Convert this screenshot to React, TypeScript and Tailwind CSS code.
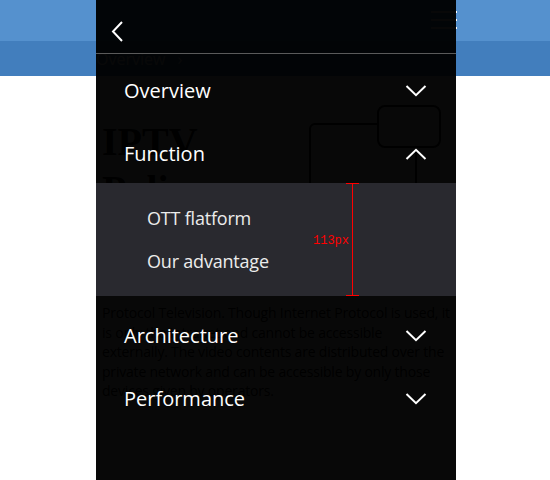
import React from "react";

const Chevron = ({ up = false }: { up?: boolean }) => (
  <svg width="22" height="12" viewBox="0 0 22 12" fill="none" className="block">
    {up ? (
      <path d="M1.5 11 L11 1.8 L20.5 11" stroke="#fff" strokeWidth="2" />
    ) : (
      <path d="M1.5 1 L11 10.2 L20.5 1" stroke="#fff" strokeWidth="2" />
    )}
  </svg>
);

const Row = ({ label, up, className }: { label: string; up?: boolean; className: string }) => (
  <div className={`flex items-center justify-between pl-[28px] pr-[29px] ${className}`}>
    <span className="text-[20px] leading-none text-white">{label}</span>
    <Chevron up={up} />
  </div>
);

export default function App() {
  return (
    <div
      className="relative w-[550px] h-[480px] overflow-hidden bg-white"
      style={{ fontFamily: "'Open Sans', 'Noto Sans', sans-serif" }}
    >
      {/* underlying page */}
      <div className="h-[41px] bg-[#5591ce]">
        <div className="mx-auto w-[360px] h-full flex justify-end items-start pt-[11px]">
          <div className="flex flex-col gap-[6px] w-[26px] mr-[-2px]">
            <div className="h-[2px] bg-white" />
            <div className="h-[2px] bg-white" />
            <div className="h-[2px] bg-white" />
          </div>
        </div>
      </div>
      <div className="h-[35px] bg-[#427ebd]">
        <div className="mx-auto w-[360px] h-full flex items-center text-white text-[16px] gap-3 pl-[1px]">
          <span>Overview</span>
          <span>›</span>
        </div>
      </div>
      <div className="mx-auto w-[360px] relative h-[404px]">
        <div
          className="pt-[42px] pl-[7px] text-[40px] font-bold leading-[48px] text-black"
          style={{ fontFamily: "'Liberation Serif', serif" }}
        >
          IPTV
          <br />
          Poli
        </div>
        <div className="absolute left-[214px] top-[47px] w-[108px] h-[140px] border-2 border-black rounded-md" />
        <div className="absolute left-[282px] top-[29px] w-[64px] h-[43px] border-2 border-black rounded-lg bg-white" />
        <p className="absolute left-[7px] top-[227px] w-[352px] whitespace-nowrap text-[14px] leading-[19.5px] tracking-[-0.2px] text-black">
          Protocol Television. Though Internet Protocol is used, it
          <br />
          is only the intranet end cannot be accessible
          <br />
          externally. The video contents are distributed over the
          <br />
          private network and can be accessible by only those
          <br />
          devices given by operators.
        </p>
      </div>

      {/* drawer overlay */}
      <div className="absolute top-0 bottom-0 left-[96px] w-[360px] bg-[rgba(0,0,0,0.97)] flex flex-col">
        <div className="h-[53px] flex items-center pl-[15px]">
          <svg width="13" height="21" viewBox="0 0 13 21" fill="none" className="mt-[10px]">
            <path d="M11 1 L2 10.5 L11 20" stroke="#fff" strokeWidth="2" />
          </svg>
        </div>
        <div className="h-[1px] bg-[#5a5a5a]" />
        <div className="pt-[6px]">
          <Row label="Overview" className="h-[62px]" />
          <Row label="Function" up className="h-[61px] pt-[3px]" />
          <div className="relative h-[113px] bg-[#29292f] flex flex-col pl-[51px] pt-[25px] gap-[22px] text-[18px] leading-[21px] text-[#ececec]">
            <span className="tracking-[-0.2px]">OTT flatform</span>
            <span className="tracking-[-0.2px]">Our advantage</span>
            <div className="absolute left-[256px] top-0 bottom-0 w-[1px] bg-[#ff0000]" />
            <div className="absolute left-[250px] top-0 w-[13px] h-[1px] bg-[#ff0000]" />
            <div className="absolute left-[250px] bottom-0 w-[13px] h-[1px] bg-[#ff0000]" />
            <span
              className="absolute left-[217px] top-[51px] text-[12px] leading-[14px] text-[#ff0000]"
              style={{ fontFamily: "'Liberation Mono', monospace" }}
            >
              113px
            </span>
          </div>
          <Row label="Architecture" className="h-[63px] mt-[8px]" />
          <Row label="Performance" className="h-[63px]" />
        </div>
      </div>
    </div>
  );
}
